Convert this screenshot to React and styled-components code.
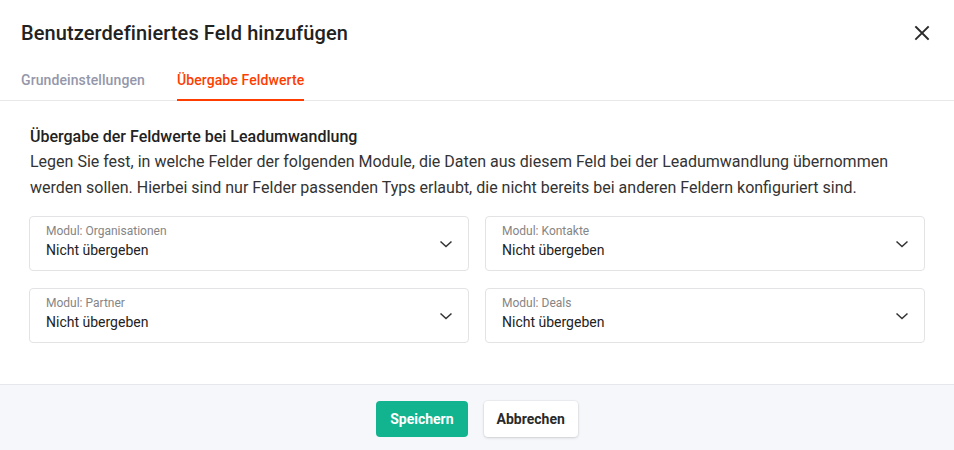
import React from "react";
import styled, { createGlobalStyle } from "styled-components";

const GlobalStyle = createGlobalStyle`
  html, body {
    margin: 0;
    padding: 0;
    background: #fff;
    font-family: Roboto, "Liberation Sans", sans-serif;
    color: #222;
  }
  * { box-sizing: border-box; }
`;

const Modal = styled.div`
  width: 954px;
  height: 450px;
  display: flex;
  flex-flow: column;
  background: #fff;
  overflow: hidden;
`;

const Header = styled.div`
  border-bottom: 1px solid #e8e8ea;
`;

const TitleRow = styled.div`
  height: 66px;
  display: flex;
  align-items: center;
  justify-content: space-between;
  padding: 0 23px 0 21px;
`;

const Title = styled.h1`
  margin: 0;
  font-size: 20px;
  font-weight: 500;
  letter-spacing: 0.09px;
  color: #222;
`;

const CloseButton = styled.button`
  width: 18px;
  height: 18px;
  padding: 0;
  border: 0;
  background: none;
  color: #2a2a2a;
  display: flex;
  align-items: center;
  justify-content: center;
  cursor: pointer;
`;

const Tabs = styled.div`
  display: flex;
  gap: 32px;
  padding: 0 21px;
`;

const Tab = styled.div`
  height: 35px;
  display: flex;
  align-items: center;
  padding-bottom: 6px;
  font-size: 14px;
  font-weight: 500;
  letter-spacing: 0.1px;
  color: ${p => (p.active ? "#ff3d00" : "#9497aa")};
  border-bottom: 2px solid ${p => (p.active ? "#ff3d00" : "transparent")};
  margin-bottom: -1px;
`;

const Body = styled.div`
  flex: 1;
  padding: 24px 29px 0 30px;
`;

const Heading = styled.h2`
  margin: 0;
  font-size: 16px;
  line-height: 24px;
  font-weight: 500;
  color: #222;
`;

const Text = styled.p`
  margin: 0 0 15px;
  font-size: 16px;
  line-height: 26px;
  color: #333;
`;

const Grid = styled.div`
  display: grid;
  grid-template-columns: 1fr 1fr;
  column-gap: 16px;
  row-gap: 17px;
  margin-left: -1px;
`;

const Select = styled.div`
  height: 55px;
  border: 1px solid #e3e3e6;
  border-radius: 4px;
  padding: 7px 16px 0;
  display: flex;
  align-items: center;
  justify-content: space-between;
  cursor: pointer;
`;

const SelectText = styled.div`
  display: flex;
  flex-flow: column;
  align-self: flex-start;
`;

const SelectLabel = styled.span`
  font-size: 12px;
  line-height: 14px;
  color: #858585;
`;

const SelectValue = styled.span`
  margin-top: 2px;
  font-size: 14px;
  line-height: 20px;
  color: #222;
`;

const Chevron = styled.svg`
  margin-right: -2px;
  margin-top: -6px;
  color: #333;
`;

const Footer = styled.div`
  height: 66px;
  border-top: 1px solid #e5e7ed;
  background: #f6f7fa;
  display: flex;
  justify-content: center;
  align-items: flex-start;
  gap: 16px;
  padding-top: 16px;
`;

const Button = styled.button`
  height: 36px;
  padding: 0 ${p => (p.primary ? 14 : 13)}px;
  border-radius: 4px;
  border: 0;
  font-family: inherit;
  font-size: 14px;
  font-weight: 700;
  cursor: pointer;
  color: ${p => (p.primary ? "#fff" : "#2a2a2a")};
  background: ${p => (p.primary ? "#12b38f" : "#fff")};
  box-shadow: ${p =>
    p.primary ? "none" : "0 1px 3px rgba(0, 0, 0, 0.14), 0 0 0 1px rgba(0, 0, 0, 0.03)"};
`;

const modules = ["Organisationen", "Kontakte", "Partner", "Deals"];

const App = () => {
  return (
    <Modal>
      <GlobalStyle />
      <Header>
        <TitleRow>
          <Title>Benutzerdefiniertes Feld hinzufügen</Title>
          <CloseButton aria-label="Schließen">
            <svg width="16" height="16" viewBox="0 0 16 16">
              <path
                d="M2 2 L14 14 M14 2 L2 14"
                stroke="currentColor"
                strokeWidth="1.9"
                strokeLinecap="square"
              />
            </svg>
          </CloseButton>
        </TitleRow>
        <Tabs>
          <Tab>Grundeinstellungen</Tab>
          <Tab active>Übergabe Feldwerte</Tab>
        </Tabs>
      </Header>

      <Body>
        <Heading>Übergabe der Feldwerte bei Leadumwandlung</Heading>
        <Text>
          Legen Sie fest, in welche Felder der folgenden Module, die Daten aus
          diesem Feld bei der Leadumwandlung übernommen werden sollen. Hierbei
          sind nur Felder passenden Typs erlaubt, die nicht bereits bei anderen
          Feldern konfiguriert sind.
        </Text>
        <Grid>
          {modules.map(m => (
            <Select key={m}>
              <SelectText>
                <SelectLabel>Modul: {m}</SelectLabel>
                <SelectValue>Nicht übergeben</SelectValue>
              </SelectText>
              <Chevron width="16" height="16" viewBox="0 0 16 16">
                <path
                  d="M2.5 5.5 L8 10.5 L13.5 5.5"
                  fill="none"
                  stroke="currentColor"
                  strokeWidth="1.5"
                />
              </Chevron>
            </Select>
          ))}
        </Grid>
      </Body>

      <Footer>
        <Button primary>Speichern</Button>
        <Button>Abbrechen</Button>
      </Footer>
    </Modal>
  );
};

export default App;
